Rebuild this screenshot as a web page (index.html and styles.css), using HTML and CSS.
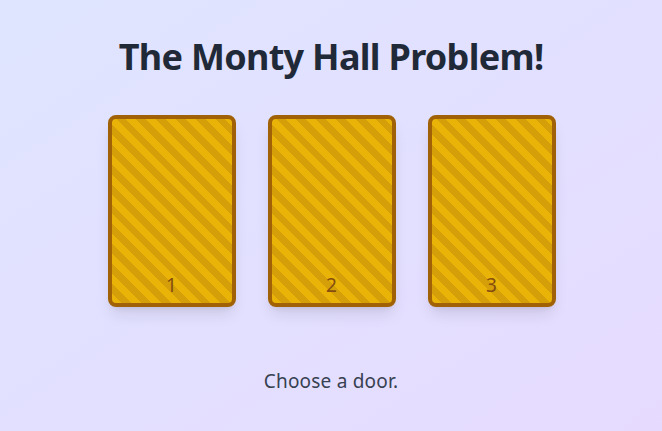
FILE: index.html
```html
<!DOCTYPE html>
<html>
<head>
    <title>Monty Hall</title>
    <link rel="stylesheet" href="styles.css">
</head>
<body>
    <div class="game">
        <h1>The Monty Hall Problem!</h1>
        <div class="doors">
            <div class="door"><span>1</span></div>
            <div class="door"><span>2</span></div>
            <div class="door"><span>3</span></div>
        </div>
        <p class="message">Choose a door.</p>
    </div>
</body>
</html>
```

FILE: styles.css
```css
html, body {
    height: 100%;
}

body {
    margin: 0;
    font-family: 'Noto Sans', 'Open Sans', sans-serif;
    background: linear-gradient(to bottom right, #dfe5ff, #e6dbff);
    color: #1f2937;
}

.game {
    display: flex;
    flex-direction: column;
    align-items: center;
    padding-top: 37px;
}

h1 {
    margin: 0 0 38px;
    font-size: 36px;
    line-height: 40px;
    font-weight: 700;
    letter-spacing: -0.7px;
}

.doors {
    display: flex;
    gap: 32px;
    margin-left: 1px;
}

.door {
    width: 120px;
    height: 184px;
    border: 4px solid #a16207;
    border-radius: 8px;
    background: repeating-linear-gradient(45deg, #eab308 0 7px, #d49f09 7px 14px);
    box-shadow: 0 10px 15px -3px rgba(0,0,0,0.1), 0 4px 6px -4px rgba(0,0,0,0.1);
    display: flex;
    align-items: flex-end;
    justify-content: center;
    cursor: pointer;
}

.door span {
    font-size: 19px;
    line-height: 28px;
    margin-bottom: 4px;
    color: #854d0e;
}

.message {
    margin: 60px 0 0;
    font-size: 19px;
    line-height: 28px;
    letter-spacing: 0.2px;
    color: #374151;
}
```
